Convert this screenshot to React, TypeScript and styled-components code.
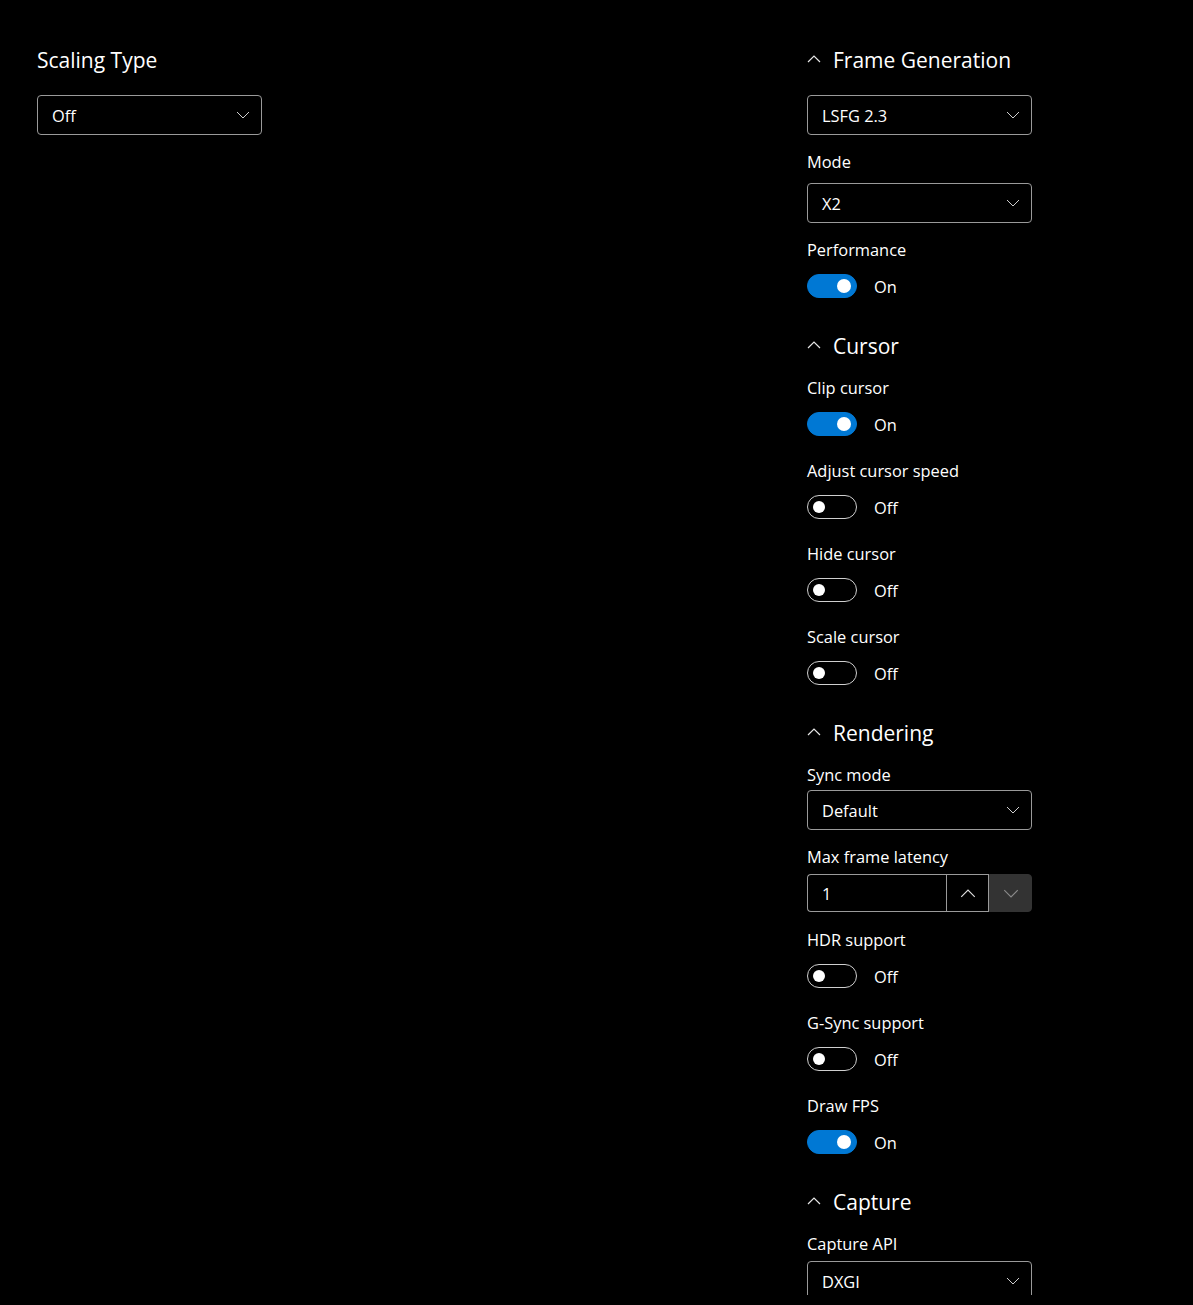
import styled, { createGlobalStyle } from 'styled-components';

const GlobalStyle = createGlobalStyle`
  html, body {
    margin: 0;
    background: #000;
  }
  body {
    font-family: "Open Sans", "Noto Sans", sans-serif;
    color: #fff;
  }
`;

function Chevron({ up, color = '#fff', size = 14, weight = 1 }: { up?: boolean; color?: string; size?: number; weight?: number }) {
  return (
    <svg width={size} height={size / 2 + 1} viewBox="0 0 14 8" fill="none">
      <polyline
        points={up ? '1,7 7,1 13,7' : '1,1 7,7 13,1'}
        stroke={color}
        strokeWidth={weight}
      />
    </svg>
  );
}

function Dropdown({ value }: { value: string }) {
  return (
    <Combo>
      <span>{value}</span>
      <Chevron color="#cfcfcf" />
    </Combo>
  );
}

function Toggle({ on }: { on: boolean }) {
  return (
    <ToggleRow>
      <Track $on={on}>
        <Knob $on={on} />
      </Track>
      <span>{on ? 'On' : 'Off'}</span>
    </ToggleRow>
  );
}

function SwitchItem({ label, on }: { label: string; on: boolean }) {
  return (
    <Item>
      <Label $gap={5}>{label}</Label>
      <Toggle on={on} />
    </Item>
  );
}

function ComboItem({ label, value, gap = 10 }: { label: string; value: string; gap?: number }) {
  return (
    <Item>
      <Label $gap={gap}>{label}</Label>
      <Dropdown value={value} />
    </Item>
  );
}

function Section({ title, first, children }: { title: string; first?: boolean; children: React.ReactNode }) {
  return (
    <SectionBox>
      <SectionHeader $first={first}>
        <Chevron up color="#e6e6e6" size={14} weight={1.2} />
        <span>{title}</span>
      </SectionHeader>
      <Items>{children}</Items>
    </SectionBox>
  );
}

export default function App() {
  return (
    <>
      <GlobalStyle />
      <Page>
        <Column>
          <PlainHeader>Scaling Type</PlainHeader>
          <Items>
            <Dropdown value="Off" />
          </Items>
        </Column>
        <Column>
          <Section title="Frame Generation" first>
            <Dropdown value="LSFG 2.3" />
            <ComboItem label="Mode" value="X2" />
            <SwitchItem label="Performance" on />
          </Section>
          <Section title="Cursor">
            <SwitchItem label="Clip cursor" on />
            <SwitchItem label="Adjust cursor speed" on={false} />
            <SwitchItem label="Hide cursor" on={false} />
            <SwitchItem label="Scale cursor" on={false} />
          </Section>
          <Section title="Rendering">
            <ComboItem label="Sync mode" value="Default" gap={4} />
            <Item>
              <Label $gap={6}>Max frame latency</Label>
              <NumberBox>
                <NumberField>1</NumberField>
                <SpinButton>
                  <Chevron up color="#e0e0e0" size={16} />
                </SpinButton>
                <SpinButton $disabled>
                  <Chevron color="#8a8a8a" size={16} />
                </SpinButton>
              </NumberBox>
            </Item>
            <SwitchItem label="HDR support" on={false} />
            <SwitchItem label="G-Sync support" on={false} />
            <SwitchItem label="Draw FPS" on />
          </Section>
          <Section title="Capture">
            <ComboItem label="Capture API" value="DXGI" gap={6} />
          </Section>
        </Column>
      </Page>
    </>
  );
}

const Page = styled.div`
  display: grid;
  grid-template-columns: 770px 225px;
  padding: 40px 0 0 37px;
  height: 1295px;
  box-sizing: border-box;
  overflow: hidden;
`;

const Column = styled.div`
  display: flex;
  flex-direction: column;
  gap: 20px;
`;

const SectionBox = styled.div`
  display: flex;
  flex-direction: column;
`;

const PlainHeader = styled.div`
  height: 40px;
  display: flex;
  align-items: center;
  font-size: 21px;
  margin-bottom: -5px;
`;

const SectionHeader = styled.div<{ $first?: boolean }>`
  height: 40px;
  display: flex;
  align-items: center;
  gap: 12px;
  font-size: 21px;
  margin-bottom: ${(p) => (p.$first ? '15px' : '11px')};

  svg {
    margin-top: -2px;
  }
`;

const Items = styled.div`
  display: flex;
  flex-direction: column;
  gap: 16px;
`;

const Item = styled.div`
  display: flex;
  flex-direction: column;
`;

const Label = styled.div<{ $gap: number }>`
  font-size: 16.4px;
  line-height: 22px;
  margin-bottom: ${(p) => p.$gap}px;
`;

const Combo = styled.div`
  width: 225px;
  height: 40px;
  box-sizing: border-box;
  border: 1px solid #9a9a9a;
  border-radius: 4px;
  background: #000;
  display: flex;
  align-items: center;
  justify-content: space-between;
  padding: 0 11px 0 14px;
  font-size: 16.4px;
`;

const ToggleRow = styled.div`
  height: 40px;
  display: flex;
  align-items: center;
  gap: 17px;
  font-size: 16.4px;
`;

const Track = styled.div<{ $on: boolean }>`
  width: 50px;
  height: 24px;
  box-sizing: border-box;
  border-radius: 12px;
  border: 1px solid ${(p) => (p.$on ? '#0078d4' : '#cfcfcf')};
  background: ${(p) => (p.$on ? '#0078d4' : 'transparent')};
  display: flex;
  align-items: center;
  justify-content: ${(p) => (p.$on ? 'flex-end' : 'flex-start')};
  padding: 0 5px;
`;

const Knob = styled.div<{ $on: boolean }>`
  width: ${(p) => (p.$on ? '14px' : '12px')};
  height: ${(p) => (p.$on ? '14px' : '12px')};
  border-radius: 50%;
  background: #fff;
`;

const NumberBox = styled.div`
  display: flex;
  width: 225px;
  height: 38px;
  margin-bottom: 1px;
`;

const NumberField = styled.div`
  flex: 1;
  box-sizing: border-box;
  border: 1px solid #9a9a9a;
  border-right: none;
  border-radius: 4px 0 0 4px;
  display: flex;
  align-items: center;
  padding-left: 14px;
  font-size: 16.4px;
`;

const SpinButton = styled.div<{ $disabled?: boolean }>`
  width: 43px;
  box-sizing: border-box;
  display: flex;
  align-items: center;
  justify-content: center;
  border: 1px solid ${(p) => (p.$disabled ? '#333' : '#9a9a9a')};
  background: ${(p) => (p.$disabled ? '#333' : '#000')};
  border-radius: ${(p) => (p.$disabled ? '0 4px 4px 0' : '0')};
`;
